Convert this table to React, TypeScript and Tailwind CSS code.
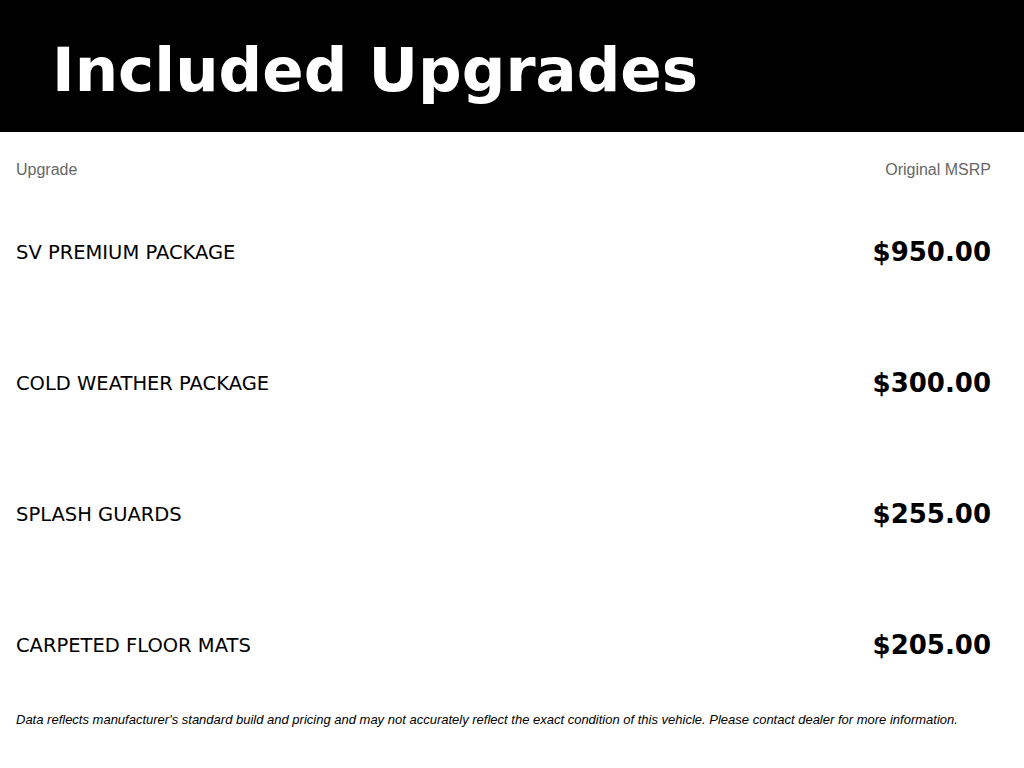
import React from "react";

const items = [
  { name: "SV PREMIUM PACKAGE", price: "$950.00" },
  { name: "COLD WEATHER PACKAGE", price: "$300.00" },
  { name: "SPLASH GUARDS", price: "$255.00" },
  { name: "CARPETED FLOOR MATS", price: "$205.00" },
];

export default function App() {
  return (
    <div className="w-[1024px] h-[768px] bg-white">
      <header className="h-[132px] bg-black flex items-center pl-[52px]">
        <h1 className="text-white font-bold text-[61px] leading-none pt-[6px] font-['DejaVu_Sans',sans-serif]">
          Included Upgrades
        </h1>
      </header>
      <main className="pl-[16px] pr-[33px]">
        <div className="flex justify-between pt-[28px] h-[55px] text-[16px] leading-[20px] text-[#666666] font-['Liberation_Sans',Arial,sans-serif]">
          <span>Upgrade</span>
          <span>Original MSRP</span>
        </div>
        {items.map((it) => (
          <div key={it.name} className="h-[131px] flex items-center justify-between">
            <span className="text-[19.5px] text-black font-['DejaVu_Sans',sans-serif]">
              {it.name}
            </span>
            <span className="text-[26px] font-bold text-black font-['DejaVu_Sans',sans-serif]">
              {it.price}
            </span>
          </div>
        ))}
        <p className="italic text-[13px] leading-[16px] text-black mt-[1px] font-['Liberation_Sans',Arial,sans-serif]">
          Data reflects manufacturer's standard build and pricing and may not accurately reflect the exact condition of this vehicle. Please contact dealer for more information.
        </p>
      </main>
    </div>
  );
}
